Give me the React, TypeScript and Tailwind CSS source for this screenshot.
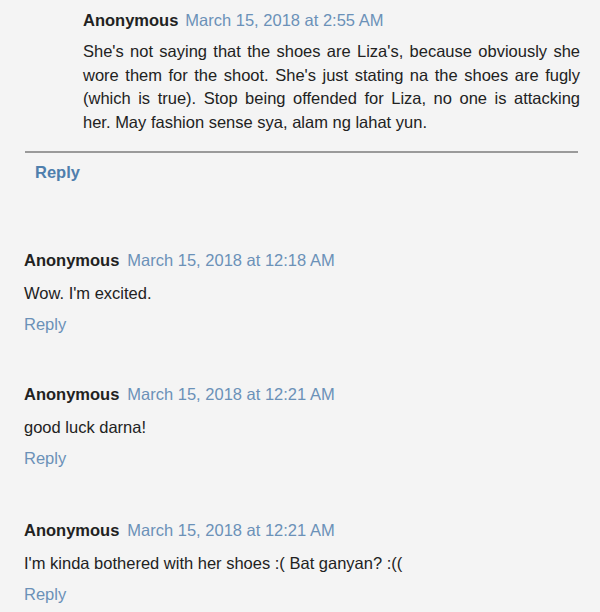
import React from "react";

const comments = [
  { author: "Anonymous", date: "March 15, 2018 at 12:18 AM", text: "Wow. I'm excited.", gap: "mt-16" },
  { author: "Anonymous", date: "March 15, 2018 at 12:21 AM", text: "good luck darna!", gap: "mt-[46px]" },
  { author: "Anonymous", date: "March 15, 2018 at 12:21 AM", text: "I'm kinda bothered with her shoes :( Bat ganyan? :((", gap: "mt-[48px]" },
];

const App = () => {
  return (
    <div className="w-[600px] h-[612px] overflow-hidden bg-[#f4f4f4] text-[16.5px] text-[#222] font-['Liberation_Sans',Arial,sans-serif]">
      {/* nested reply thread */}
      <div className="pt-2 pl-[25px] pr-[20px]">
        <div className="pl-[58px]">
          <div className="leading-6">
            <span className="font-bold text-[#222]">Anonymous</span>
            <span className="ml-[7px] text-[#6b91b8]">March 15, 2018 at 2:55 AM</span>
          </div>
          <p className="mt-2 leading-[23.5px] text-justify">
            She's not saying that the shoes are Liza's, because obviously she wore them for the shoot. She's just stating na the shoes are fugly (which is true). Stop being offended for Liza, no one is attacking her.{"\u00a0"}May fashion sense sya, alam ng lahat yun.
          </p>
        </div>
        <div className="mt-[17px] mr-[2px] h-[2px] bg-[#9a9a9a]" />
        <div className="mt-[7px] pl-[10px] leading-6 font-bold text-[#4f7fad]">Reply</div>
      </div>

      <div className="pl-6">
        {comments.map((c, i) => (
          <div key={i} className={c.gap}>
            <div className="leading-6">
              <span className="font-bold text-[#222]">{c.author}</span>
              <span className="ml-2 text-[#6b91b8]">{c.date}</span>
            </div>
            <p className="mt-[9px] leading-6">{c.text}</p>
            <div className="mt-[7px] leading-6 text-[#6b91b8]">Reply</div>
          </div>
        ))}
      </div>
    </div>
  );
};

export default App;
